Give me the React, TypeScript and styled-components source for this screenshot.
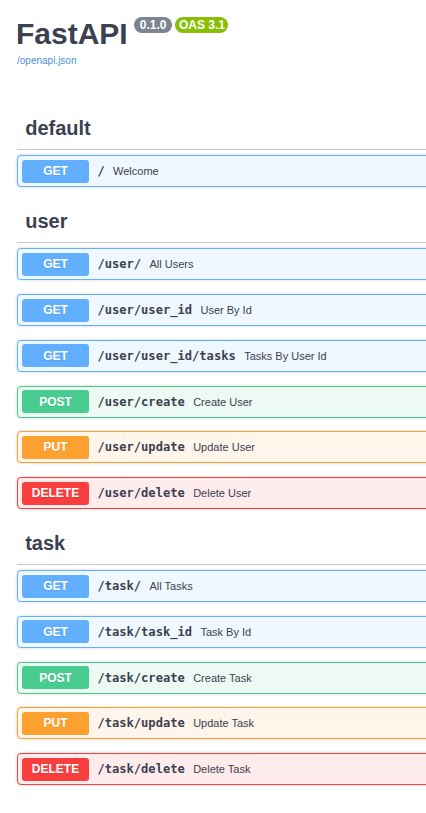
import React from "react";
import styled, { createGlobalStyle } from "styled-components";

type Method = "GET" | "POST" | "PUT" | "DELETE";

const palette: Record<Method, { main: string; bg: string }> = {
  GET: { main: "#61affe", bg: "#eff7ff" },
  POST: { main: "#49cc90", bg: "#edfaf4" },
  PUT: { main: "#fca130", bg: "#fff5ea" },
  DELETE: { main: "#f93e3e", bg: "#feebeb" },
};

const GlobalStyle = createGlobalStyle`
  html, body {
    margin: 0;
    padding: 0;
    background: #ffffff;
    overflow: hidden;
  }
  body {
    font-family: "Liberation Sans", Arial, sans-serif;
    color: #3b4151;
  }
`;

const Page = styled.div`
  width: 640px;
  padding: 17px 0 0 17px;
  box-sizing: border-box;
`;

const Info = styled.div`
  margin-bottom: 41px;
`;

const TitleRow = styled.div`
  display: flex;
  align-items: flex-start;
`;

const Title = styled.h1`
  margin: 0 0 0 -1px;
  font-size: 30px;
  line-height: 34px;
  font-weight: 700;
  color: #3b4151;
`;

const Badge = styled.span<{ $bg: string; $pad: number; $ml: number }>`
  display: inline-block;
  margin-left: ${(p) => p.$ml}px;
  padding: 2px ${(p) => p.$pad}px;
  border-radius: 57px;
  background: ${(p) => p.$bg};
  color: #ffffff;
  font-size: 12px;
  line-height: 12px;
  font-weight: 700;
`;

const SpecLink = styled.a`
  display: block;
  margin-top: 4px;
  font-size: 10px;
  line-height: 12px;
  color: #4990e2;
  text-decoration: none;
`;

const TagHeading = styled.h3`
  margin: 0 0 5px;
  padding: 8px 0 9.3px 8.2px;
  font-size: 20px;
  line-height: 24px;
  font-weight: 700;
  color: #3b4151;
  border-bottom: 1px solid #c4c6cb;
`;

const OpBlock = styled.div<{ $method: Method }>`
  display: flex;
  align-items: center;
  box-sizing: border-box;
  height: 32px;
  margin-bottom: 13.75px;
  padding: 0 4px;
  border: 1px solid ${(p) => palette[p.$method].main};
  border-radius: 4px;
  background: ${(p) => palette[p.$method].bg};
  box-shadow: 0 0 3px rgba(0, 0, 0, 0.19);
`;

const MethodLabel = styled.span<{ $method: Method }>`
  flex: none;
  display: flex;
  align-items: center;
  justify-content: center;
  width: 67px;
  height: 23px;
  border-radius: 3px;
  background: ${(p) => palette[p.$method].main};
  color: #ffffff;
  font-size: 12px;
  font-weight: 700;
  text-shadow: 0 1px 0 rgba(0, 0, 0, 0.1);
`;

const Path = styled.span`
  padding: 0 8.4px;
  font-family: "DejaVu Sans Mono", "Liberation Mono", monospace;
  font-size: 12.1px;
  font-weight: 700;
  color: #3b4151;
`;

const Summary = styled.span`
  font-size: 11px;
  color: #3b4151;
`;

type Op = { method: Method; path: string; summary: string };
type Tag = { name: string; ops: Op[] };

const tags: Tag[] = [
  { name: "default", ops: [{ method: "GET", path: "/", summary: "Welcome" }] },
  {
    name: "user",
    ops: [
      { method: "GET", path: "/user/", summary: "All Users" },
      { method: "GET", path: "/user/user_id", summary: "User By Id" },
      { method: "GET", path: "/user/user_id/tasks", summary: "Tasks By User Id" },
      { method: "POST", path: "/user/create", summary: "Create User" },
      { method: "PUT", path: "/user/update", summary: "Update User" },
      { method: "DELETE", path: "/user/delete", summary: "Delete User" },
    ],
  },
  {
    name: "task",
    ops: [
      { method: "GET", path: "/task/", summary: "All Tasks" },
      { method: "GET", path: "/task/task_id", summary: "Task By Id" },
      { method: "POST", path: "/task/create", summary: "Create Task" },
      { method: "PUT", path: "/task/update", summary: "Update Task" },
      { method: "DELETE", path: "/task/delete", summary: "Delete Task" },
    ],
  },
];

export default function App() {
  return (
    <>
      <GlobalStyle />
      <Page>
        <Info>
          <TitleRow>
            <Title>FastAPI</Title>
            <Badge $bg="#7d8492" $pad={6} $ml={6}>0.1.0</Badge>
            <Badge $bg="#89bf04" $pad={3.5} $ml={3}>OAS 3.1</Badge>
          </TitleRow>
          <SpecLink href="#">/openapi.json</SpecLink>
        </Info>
        {tags.map((tag) => (
          <section key={tag.name}>
            <TagHeading>{tag.name}</TagHeading>
            {tag.ops.map((op) => (
              <OpBlock key={op.method + op.path} $method={op.method}>
                <MethodLabel $method={op.method}>{op.method}</MethodLabel>
                <Path>{op.path}</Path>
                <Summary>{op.summary}</Summary>
              </OpBlock>
            ))}
          </section>
        ))}
      </Page>
    </>
  );
}
